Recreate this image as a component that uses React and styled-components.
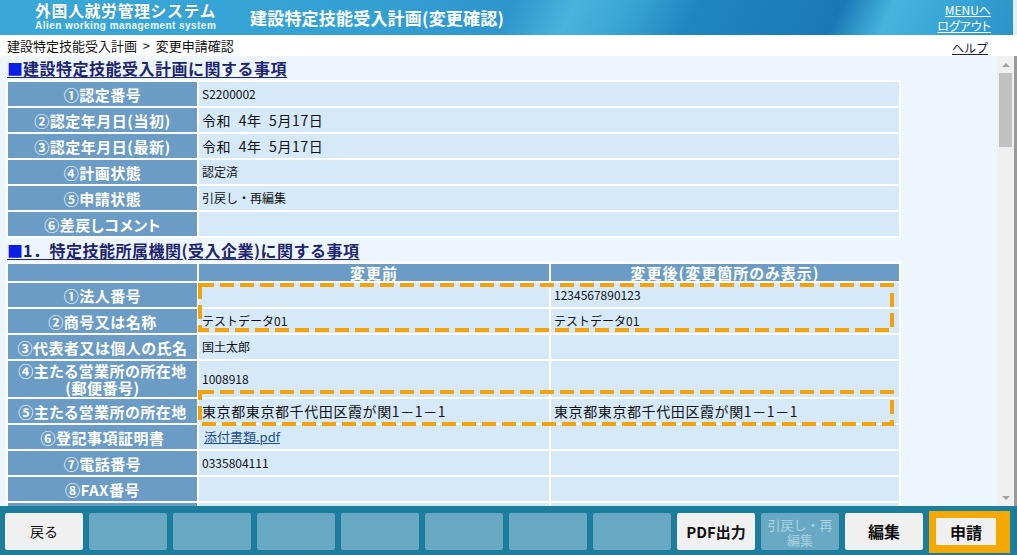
import React from 'react';
import styled, {createGlobalStyle} from 'styled-components';

const GlobalStyle = createGlobalStyle`
    html, body {
        margin: 0;
        padding: 0;
        background: #fff;
    }
    body {
        font-family: "Noto Sans CJK JP", "Liberation Sans", sans-serif;
        color: #111;
    }
`

const Page = styled.div`
    width: 1017px;
    height: 555px;
    display: flex;
    flex-direction: column;
    overflow: hidden;
`

const Header = styled.header`
    height: 35px;
    flex: none;
    display: flex;
    align-items: center;
    padding-left: 35px;
    border-right: 4px solid #e4edf2;
    background: linear-gradient(115deg, #3aa8d8 0%, #34a1d4 35%, #2d96cd 50%, #4ab3dc 56%, #3aa6d5 61%, #1f86c0 68%, #1979b6 82%, #45b4dd 87%, #3aa8d7 92%, #2a92c9 100%);
`

const Logo = styled.div`
    width: 215px;
    align-self: flex-start;
    display: flex;
    flex-direction: column;
    padding-top: 1px;
    color: #fff;
`

const LogoJa = styled.span`
    font-size: 16px;
    font-weight: bold;
    letter-spacing: 0.5px;
    line-height: 18px;
    text-shadow: 0 0 1px rgba(0, 60, 110, 0.4);
`

const LogoEn = styled.span`
    font-family: "Liberation Sans", Arial, sans-serif;
    font-size: 10px;
    font-weight: bold;
    letter-spacing: 0.45px;
    line-height: 13px;
    color: #eef8fd;
`

const PageTitle = styled.h1`
    margin: 0;
    font-size: 17px;
    font-weight: bold;
    color: #fff;
    letter-spacing: 0.2px;
`

const HeaderLinks = styled.div`
    margin-left: auto;
    padding-right: 22px;
    display: flex;
    flex-direction: column;
    align-items: flex-end;
    gap: 2px;
`

const HeaderLink = styled.a`
    font-size: 12px;
    line-height: 14px;
    color: #fff;
    text-decoration: underline;
    font-feature-settings: "palt";
`

const Breadcrumb = styled.div`
    height: 21px;
    flex: none;
    display: flex;
    align-items: center;
    justify-content: space-between;
    padding: 0 29px 0 7px;
    font-size: 13px;
    background: #fff;
    color: #111;
    white-space: pre;
`

const HelpLink = styled.a`
    font-size: 12px;
    color: #1a1a4a;
    text-decoration: underline;
    margin-top: 3px;
`

const Body = styled.div`
    flex: 1;
    display: flex;
    min-height: 0;
    background: #eef6fd;
    border-right: 3px solid #9a9a9a;
`

const Content = styled.main`
    flex: 1;
    overflow: hidden;
    padding-left: 6px;
`

const SectionTitle = styled.h2`
    margin: 0;
    height: 24px;
    line-height: 24px;
    font-size: 16px;
    font-weight: bold;
    letter-spacing: 0.5px;
    color: #1d2470;
    text-decoration: underline;
    text-underline-offset: 2px;
    margin-left: 1px;
    white-space: nowrap;
`

const Square = styled.span`
    color: #0a1ee6;
    letter-spacing: 0;
`

const TableWrap = styled.div`
    position: relative;
    width: 895px;
`

const InfoTable = styled.table`
    width: 895px;
    table-layout: fixed;
    border-spacing: 2px;
    background: #fff;
`

const Label = styled.th`
    width: ${p => p.$w || 189}px;
    height: ${p => p.$h || 24}px;
    padding: 0 2px;
    box-sizing: border-box;
    background: #6b9cc5;
    color: #fff;
    font-size: 15px;
    font-weight: bold;
    line-height: 17px;
    letter-spacing: 0.5px;
    font-feature-settings: "palt";
    text-align: center;
    vertical-align: middle;
    white-space: nowrap;
`

const HeadCell = styled(Label)`
    height: 17px;
    line-height: 15px;
    letter-spacing: 1px;
`

const Value = styled.td`
    height: ${p => p.$h || 24}px;
    padding: 0 3px;
    box-sizing: border-box;
    background: #d5e9f8;
    font-size: ${p => (p.$big ? 14 : 12)}px;
    letter-spacing: ${p => (p.$big ? 0.6 : 0)}px;
    line-height: 16px;
    vertical-align: middle;
    white-space: pre;
    color: #111;
`

const FileLink = styled.a`
    color: #1d4f8f;
    text-decoration: underline;
    font-size: 13px;
    margin-left: 2px;
`

const DashBox = styled.svg`
    position: absolute;
    left: ${p => p.$x}px;
    top: ${p => p.$y}px;
    pointer-events: none;
`

const ScrollBar = styled.div`
    width: 17px;
    flex: none;
    display: flex;
    flex-direction: column;
    background: #f0f0f0;
`

const ScrollArrow = styled.div`
    height: 17px;
    display: flex;
    align-items: center;
    justify-content: center;
    &::before {
        content: '';
        border-left: 4px solid transparent;
        border-right: 4px solid transparent;
        ${p => (p.$down
            ? 'border-top: 4px solid #a3a3a3;'
            : 'border-bottom: 4px solid #a3a3a3;')}
    }
`

const ScrollTrack = styled.div`
    flex: 1;
    padding: 0 2px;
`

const ScrollThumb = styled.div`
    height: 74px;
    background: #c1c1c1;
`

const Toolbar = styled.footer`
    height: 49px;
    flex: none;
    display: flex;
    align-items: center;
    gap: 6px;
    padding-left: 5px;
    background: #1c7d9d;
`

const ToolButton = styled.button`
    width: 78px;
    height: 37px;
    flex: none;
    border: none;
    border-radius: 2px;
    padding: 0;
    font-family: "Noto Sans CJK JP", sans-serif;
    font-size: ${p => p.$size || 15}px;
    font-weight: ${p => (p.$bold ? 'bold' : 'normal')};
    line-height: 15px;
    background: ${p => (p.$active ? '#f0f0f0' : '#69a9c3')};
    color: ${p => (p.$active ? '#111' : '#a9d3e2')};
    margin-top: 2px;
`

const PrimaryFrame = styled.div`
    width: 81px;
    height: 42px;
    flex: none;
    box-sizing: border-box;
    padding: 7px 14px 8px 7px;
    background: #f4a900;
    margin-top: 3px;
`

const PrimaryButton = styled.button`
    width: 100%;
    height: 100%;
    border: none;
    padding: 0;
    background: #f0f0f0;
    font-family: "Noto Sans CJK JP", sans-serif;
    font-size: 16px;
    font-weight: bold;
    color: #111;
`

const planRows = [
    {label: '①認定番号', value: 'S2200002'},
    {label: '②認定年月日(当初)', value: '令和  4年  5月17日', big: true},
    {label: '③認定年月日(最新)', value: '令和  4年  5月17日', big: true},
    {label: '④計画状態', value: '認定済'},
    {label: '⑤申請状態', value: '引戻し・再編集'},
    {label: '⑥差戻しコメント', value: ''},
]

const companyRows = [
    {label: '①法人番号', before: '', after: '1234567890123'},
    {label: '②商号又は名称', before: 'テストデータ01', after: 'テストデータ01'},
    {label: '③代表者又は個人の氏名', before: '国土太郎', after: ''},
    {label: <>④主たる営業所の所在地<br/>(郵便番号)</>, before: '1008918', after: '', h: 36},
    {label: '⑤主たる営業所の所在地', before: '東京都東京都千代田区霞が関1－1－1', after: '東京都東京都千代田区霞が関1－1－1', big: true},
    {label: '⑥登記事項証明書', file: '添付書類.pdf', after: ''},
    {label: '⑦電話番号', before: '0335804111', after: ''},
    {label: '⑧FAX番号', before: '', after: ''},
    {label: '⑨メールアドレス', before: '', after: ''},
]

// changed rows get an orange dashed frame over the table
function Dashed({x, y, w, h}) {
    return (
        <DashBox $x={x} $y={y} width={w} height={h}>
            <rect x="2" y="2" width={w - 4} height={h - 4} fill="none"
                stroke="#f3a20c" strokeWidth="4" strokeDasharray="14 6"/>
        </DashBox>
    )
}

const tools = ['戻る', '', '', '', '', '', '', '']

function App() {
    return (
        <Page>
            <GlobalStyle/>
            <Header>
                <Logo>
                    <LogoJa>外国人就労管理システム</LogoJa>
                    <LogoEn>Alien working management system</LogoEn>
                </Logo>
                <PageTitle>建設特定技能受入計画(変更確認)</PageTitle>
                <HeaderLinks>
                    <HeaderLink>MENUへ</HeaderLink>
                    <HeaderLink>ログアウト</HeaderLink>
                </HeaderLinks>
            </Header>
            <Breadcrumb>
                <span>{'建設特定技能受入計画  >  変更申請確認'}</span>
                <HelpLink>ヘルプ</HelpLink>
            </Breadcrumb>
            <Body>
                <Content>
                    <SectionTitle><Square>■</Square>建設特定技能受入計画に関する事項</SectionTitle>
                    <TableWrap>
                        <InfoTable>
                            <tbody>
                                {planRows.map(row => (
                                    <tr key={row.label}>
                                        <Label>{row.label}</Label>
                                        <Value $big={row.big}>{row.value}</Value>
                                    </tr>
                                ))}
                            </tbody>
                        </InfoTable>
                    </TableWrap>
                    <SectionTitle><Square>■</Square>1．特定技能所属機関(受入企業)に関する事項</SectionTitle>
                    <TableWrap>
                        <InfoTable>
                            <thead>
                                <tr>
                                    <HeadCell></HeadCell>
                                    <HeadCell $w={350}>変更前</HeadCell>
                                    <HeadCell $w={348}>変更後(変更箇所のみ表示)</HeadCell>
                                </tr>
                            </thead>
                            <tbody>
                                {companyRows.map((row, i) => (
                                    <tr key={i}>
                                        <Label $h={row.h}>{row.label}</Label>
                                        <Value $h={row.h} $big={row.big}>
                                            {row.file ? <FileLink>{row.file}</FileLink> : row.before}
                                        </Value>
                                        <Value $h={row.h} $big={row.big}>{row.after}</Value>
                                    </tr>
                                ))}
                            </tbody>
                        </InfoTable>
                        <Dashed x={192} y={21} w={696} h={49}/>
                        <Dashed x={192} y={128} w={696} h={36}/>
                    </TableWrap>
                </Content>
                <ScrollBar>
                    <ScrollArrow/>
                    <ScrollTrack><ScrollThumb/></ScrollTrack>
                    <ScrollArrow $down/>
                </ScrollBar>
            </Body>
            <Toolbar>
                {tools.map((t, i) => (
                    <ToolButton key={i} $active={!!t} $size={14}>{t}</ToolButton>
                ))}
                <ToolButton $active $bold>PDF出力</ToolButton>
                <ToolButton $size={13}>引戻し・再<br/>編集</ToolButton>
                <ToolButton $active $bold $size={16}>編集</ToolButton>
                <PrimaryFrame>
                    <PrimaryButton>申請</PrimaryButton>
                </PrimaryFrame>
            </Toolbar>
        </Page>
    );
}

export default App;
